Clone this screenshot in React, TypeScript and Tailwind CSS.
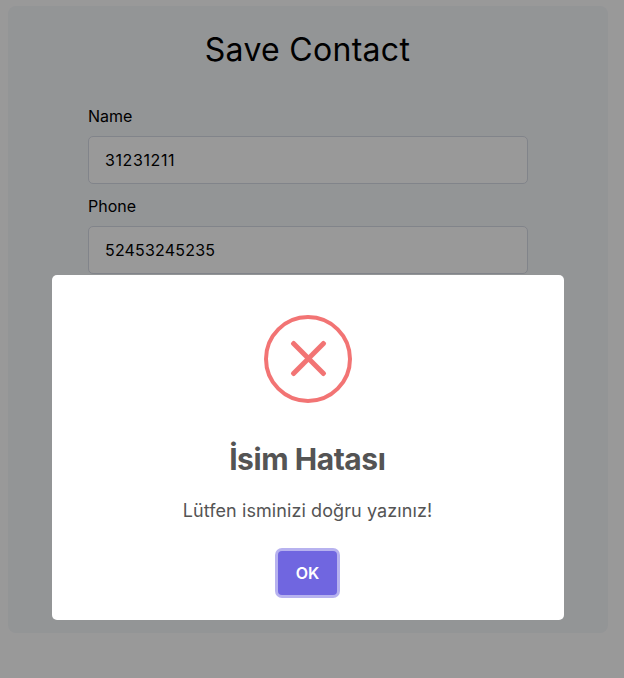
import React from "react";

function Field({ label, value, valueClass }: { label: string; value: string; valueClass: string }) {
  return (
    <div className="mb-2">
      <label className="block h-[34px] text-base leading-[29px] text-black">{label}</label>
      <div className={`flex h-12 items-center rounded-[5px] border border-[#d8dde6] bg-white px-4 text-base text-black ${valueClass}`}>
        {value}
      </div>
    </div>
  );
}

export default function App() {
  return (
    <div className="relative h-[678px] w-[624px] overflow-hidden bg-white font-['Inter',sans-serif]">
      <main className="pl-2 pt-1.5">
        <section className="h-[627px] w-[600px] rounded-lg bg-[#f5f8fb] px-20 pt-[19px]">
          <h1 className="mb-[27px] pr-px text-center text-[32px] leading-[50px] tracking-[0.3px] text-black">Save Contact</h1>
          <Field label="Name" value="31231211" valueClass="tracking-[0.6px]" />
          <Field label="Phone" value="52453245235" valueClass="tracking-[0.18px]" />
        </section>
      </main>
      <div className="absolute inset-0 bg-black/40 pl-[52px] pt-[275px]">
        <div role="dialog" className="flex h-[345px] w-[512px] flex-col items-center rounded-[5px] bg-white pt-10">
          <svg width="88" height="88" viewBox="0 0 88 88" fill="#f27474">
            <circle cx="44" cy="44" r="42" fill="none" stroke="#f27474" strokeWidth="4" />
            <rect x="21" y="41" width="47" height="5" rx="2" transform="rotate(45 44.5 43.5)" />
            <rect x="21" y="41" width="47" height="5" rx="2" transform="rotate(-45 44.5 43.5)" />
          </svg>
          <h2 className="mt-9 pr-[1.5px] text-[30px] font-bold leading-[40px] tracking-[-0.45px] text-[#545454]">İsim Hatası</h2>
          <p className="mt-[18px] pr-px text-[18px] leading-[27px] tracking-[0.09px] text-[#545454]">Lütfen isminizi doğru yazınız!</p>
          <button className="mr-px mt-[27px] h-[44px] w-[59px] rounded-[4px] bg-[#7066e0] text-base font-semibold text-white ring-[3px] ring-[#7066e0]/50">OK</button>
        </div>
      </div>
    </div>
  );
}
